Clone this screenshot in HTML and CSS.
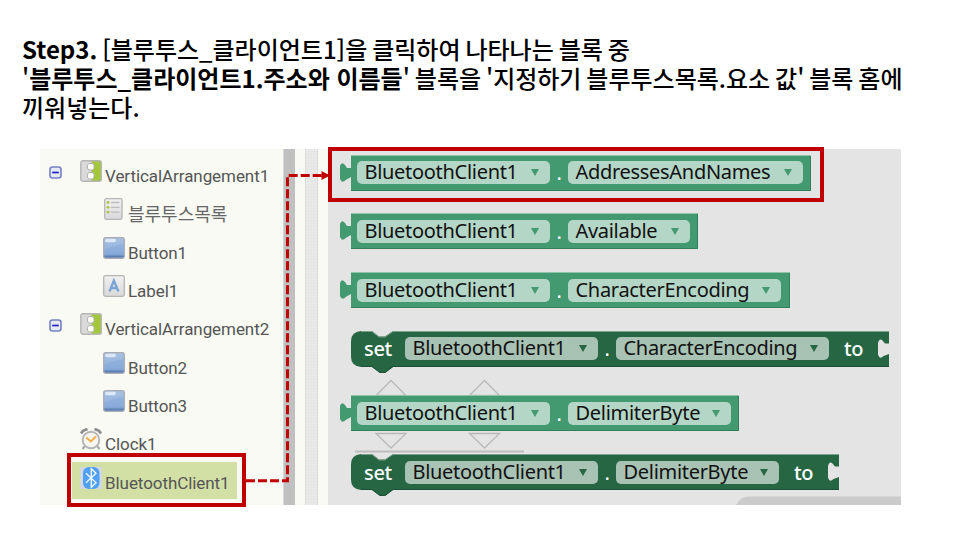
FILE: index.html
```
<!DOCTYPE html>
<html lang="ko">
<head>
<meta charset="utf-8">
<title>Step3</title>
<link rel="stylesheet" href="styles.css">
</head>
<body>
<svg class="defs" aria-hidden="true">
  <defs>
    <linearGradient id="blue" x1="0" y1="0" x2="0" y2="1"><stop offset="0" stop-color="#a9c1e2"/><stop offset=".75" stop-color="#8fb0dc"/><stop offset="1" stop-color="#5f83b5"/></linearGradient>
    <linearGradient id="grey" x1="0" y1="0" x2="0" y2="1"><stop offset="0" stop-color="#f1f1f1"/><stop offset="1" stop-color="#d9d9d9"/></linearGradient>
    <symbol id="i-minus" viewBox="0 0 13 13"><rect x="1" y="1" width="11" height="11" rx="2.5" fill="#e6e9f6" stroke="#7680c4" stroke-width="1.6"/><path d="M3.2 6.5h6.6" stroke="#2323c8" stroke-width="1.7"/></symbol>
    <symbol id="i-vert" viewBox="0 0 22 22"><rect x=".8" y=".8" width="20.4" height="20.4" rx="2" fill="#dadada"/><path d="M11.5 1H20a1.5 1.5 0 0 1 1.5 1.5v17A1.5 1.5 0 0 1 20 21h-8.500z" fill="#a4c639"/><rect x=".8" y=".8" width="20.400" height="20.400" rx="2" fill="none" stroke="#b5b5b5" stroke-width="1.400"/><rect x="7.500" y="3.500" width="6.500" height="6.500" rx="2" fill="#fff" stroke="#b0b0b0"/><rect x="7.500" y="12.500" width="6.500" height="6.500" rx="2" fill="#fff" stroke="#b0b0b0"/></symbol>
    <symbol id="i-list" viewBox="0 0 22 22"><rect x="1.700" y=".7" width="17.300" height="20.600" rx="1.500" fill="url(#grey)" stroke="#b5b5b5" stroke-width="1.300"/><g fill="#a4c639"><circle cx="5" cy="4.500" r="1.400"/><circle cx="5" cy="9.300" r="1.400"/><circle cx="5" cy="14.100" r="1.400"/></g><path d="M8 4.500h8.500M8 9.300h8.500M8 14.100h8.500" stroke="#bcbcbc" stroke-width="1.300"/></symbol>
    <symbol id="i-button" viewBox="0 0 22 22"><rect x=".7" y=".7" width="20.600" height="20.600" rx="1.800" fill="url(#blue)" stroke="#a9acb3" stroke-width="1.300"/><path d="M1.500 12C6 12 10 8 20.500 7.500V18.500H1.500z" fill="#83a7d9" opacity=".45"/><rect x="2" y="1.800" width="11" height="3.400" rx="1.700" fill="#dce8f7"/><path d="M1.500 19.300h19" stroke="#5e80b3" stroke-width="1.400"/></symbol>
    <symbol id="i-label" viewBox="0 0 22 22"><rect x=".7" y=".7" width="20.600" height="20.600" rx="1.800" fill="url(#grey)" stroke="#b5b5b5" stroke-width="1.300"/><path d="M6.500 16.500 10.900 5.500 15.400 16.500M8 13h6" fill="none" stroke="#7ba3d6" stroke-width="2.300"/></symbol>
    <symbol id="i-clock" viewBox="0 0 22 22"><path d="M1 5.500 3 2.800 7.500 1M21 5.500 19 2.800 14.500 1" fill="none" stroke="#8d8d8d" stroke-width="2.800"/><path d="m5 18-2.500 3M17 18l2.500 3" stroke="#a5a5a5" stroke-width="2"/><circle cx="11" cy="12" r="8.300" fill="#f7f5f0" stroke="#b4b4b4" stroke-width="1.900"/><path d="m6.300 9.500 4.500 4 5.200-5" fill="none" stroke="#f2ae49" stroke-width="2"/></symbol>
    <symbol id="i-bt" viewBox="0 0 22 22"><rect width="22" height="22" fill="#d2d8dc"/><rect x="3" y="0" width="16.500" height="22" rx="6" fill="#50a0f5"/><path d="m6 6.200 10 9.500-4.700 4.600V1.700L16 6.200 6 15.700" fill="none" stroke="#eef6ff" stroke-width="1.400"/></symbol>
  </defs>
</svg>

<main class="slide">
  <p class="lead"><span class="line"><b>Step3.</b> [블루투스_클라이언트1]을 클릭하여 나타나는 블록 중</span><span class="line">'<b>블루투스_클라이언트1.주소와 이름들</b>' 블록을 '지정하기 블루투스목록.요소 값' 블록 홈에</span><span class="line">끼워넣는다.</span></p>

  <section class="shot">
    <nav class="tree">
      <div class="row"><svg class="toggle"><use href="#i-minus"/></svg><svg class="icon"><use href="#i-vert"/></svg><span>VerticalArrangement1</span></div>
      <div class="row child"><svg class="icon"><use href="#i-list"/></svg><span class="ko">블루투스목록</span></div>
      <div class="row child"><svg class="icon"><use href="#i-button"/></svg><span>Button1</span></div>
      <div class="row child"><svg class="icon"><use href="#i-label"/></svg><span>Label1</span></div>
      <div class="row"><svg class="toggle"><use href="#i-minus"/></svg><svg class="icon"><use href="#i-vert"/></svg><span>VerticalArrangement2</span></div>
      <div class="row child"><svg class="icon"><use href="#i-button"/></svg><span>Button2</span></div>
      <div class="row child"><svg class="icon"><use href="#i-button"/></svg><span>Button3</span></div>
      <div class="row leaf"><svg class="icon"><use href="#i-clock"/></svg><span>Clock1</span></div>
      <div class="row leaf selected"><svg class="icon"><use href="#i-bt"/></svg><span>BluetoothClient1</span></div>
    </nav>
    <div class="scrollbar"></div>
    <div class="gutter"></div>
    <div class="texture"></div>
    <div class="gutter"></div>
    <div class="flyout">
      <svg class="ghost" width="573" height="356"><g fill="none" stroke="#b9b9b9" stroke-width="1.300"><path d="M48 246.500 63 231.500 78 246.500zM141.500 246.500 156.500 231.500 171.500 246.500zM48 284.500h30L63 299zM141.500 284.500h30L156.500 299z"/></g><path d="M27 302.500h169" stroke="#bdbdbd" stroke-width="2"/><path d="M408 356q4-8.500 13-8.500H573v8.500z" fill="#cbcbcb"/></svg>

      <div class="block get w-addr">
        <svg class="shape"><path d="M0 0H460V36H0V22L-5 24.800Q-9 29-11 24V11Q-9.500 6-6 10L-4 13H0z"/><path class="hi" d="M0 .5H460"/><path class="lo" d="M0 35.500H459.500V1"/></svg>
        <span class="pill"><span>BluetoothClient1</span><i></i></span><span class="dot">.</span><span class="pill"><span>AddressesAndNames</span><i></i></span>
      </div>
      <div class="block get w-avail">
        <svg class="shape"><path d="M0 0H347V36H0V22L-5 24.800Q-9 29-11 24V11Q-9.500 6-6 10L-4 13H0z"/><path class="hi" d="M0 .5H347"/><path class="lo" d="M0 35.500H346.500V1"/></svg>
        <span class="pill"><span>BluetoothClient1</span><i></i></span><span class="dot">.</span><span class="pill"><span>Available</span><i></i></span>
      </div>
      <div class="block get w-char">
        <svg class="shape"><path d="M0 0H439V36H0V22L-5 24.800Q-9 29-11 24V11Q-9.500 6-6 10L-4 13H0z"/><path class="hi" d="M0 .5H439"/><path class="lo" d="M0 35.500H438.500V1"/></svg>
        <span class="pill"><span>BluetoothClient1</span><i></i></span><span class="dot">.</span><span class="pill"><span>CharacterEncoding</span><i></i></span>
      </div>
      <div class="block set w-char">
        <svg class="shape"><path d="M10 0H21L28 5.500H34L42 0H538V12.500H534L531.500 9.500Q528.500 6.500 527 12V23.500Q528.500 29 532.500 25L538 23V36H42L34 42H29L21 36H10Q0 35 0 26V10Q0 1 10 0z"/><path class="hi" d="M10 .5H21L28 6H34L42 .5H538"/><path class="lo" d="M10 35.500H21L29 41.500H34L42 35.500H538"/></svg>
        <span class="word">set</span><span class="pill"><span>BluetoothClient1</span><i></i></span><span class="dot">.</span><span class="pill"><span>CharacterEncoding</span><i></i></span><span class="word to">to</span>
      </div>
      <div class="block get w-delim">
        <svg class="shape"><path d="M0 0H388V36H0V22L-5 24.800Q-9 29-11 24V11Q-9.500 6-6 10L-4 13H0z"/><path class="hi" d="M0 .5H388"/><path class="lo" d="M0 35.500H387.500V1"/></svg>
        <span class="pill"><span>BluetoothClient1</span><i></i></span><span class="dot">.</span><span class="pill"><span>DelimiterByte</span><i></i></span>
      </div>
      <div class="block set w-delim">
        <svg class="shape"><path d="M10 0H21L28 5.500H34L42 0H488V12.500H484L481.500 9.500Q478.500 6.500 477 12V23.500Q478.500 29 482.500 25L488 23V36H42L34 42H29L21 36H10Q0 35 0 26V10Q0 1 10 0z"/><path class="hi" d="M10 .5H21L28 6H34L42 .5H488"/><path class="lo" d="M10 35.500H21L29 41.500H34L42 35.500H488"/></svg>
        <span class="word">set</span><span class="pill"><span>BluetoothClient1</span><i></i></span><span class="dot">.</span><span class="pill"><span>DelimiterByte</span><i></i></span><span class="word to">to</span>
      </div>
    </div>
  </section>

  <svg class="callout" width="960" height="540" viewBox="0 0 960 540" fill="none" stroke="#c00000">
    <rect x="330" y="149" width="492" height="51" stroke-width="4"/>
    <rect x="69" y="455" width="175" height="50" stroke-width="4"/>
    <path d="M246 480.800H287.500V175.500H322" stroke-width="3" stroke-dasharray="9 3"/>
    <path d="M321.500 171 330 175.500 321.500 180z" fill="#c00000" stroke="none"/>
  </svg>
</main>
</body>
</html>
```
FILE: styles.css
```
* { box-sizing: border-box; }
body { margin: 0; background: #fff; }
.defs { position: absolute; width: 0; height: 0; }
.slide { position: relative; width: 960px; height: 540px; overflow: hidden; padding: 34px 0 0 22px; }
.lead {
  margin: 0 0 28px; height: 87px; word-spacing: -1.800px;
  font: 500 24px/29px "Noto Sans CJK KR", sans-serif; color: #000; white-space: nowrap;
}
.line { display: block; height: 29px; }
.lead b { font-weight: 700; word-spacing: 0; }

.shot { display: flex; width: 861px; height: 356px; margin-left: 18px; background: #f8faf3; overflow: hidden; }
.tree { width: 243px; padding: 6px 0 0 9px; }
.row {
  display: flex; align-items: flex-start; height: 37px; margin-bottom: 1.350px;
  font: 400 17px/20px Roboto, sans-serif; letter-spacing: -.07px; color: #555;
}
.row span { margin: 11px 0 0 3px; white-space: nowrap; }
.row .ko { margin-top: 10px; font: 400 18px/20px "Noto Sans CJK KR", sans-serif; letter-spacing: 0; color: #666; }
.toggle { width: 13px; height: 13px; margin: 11px 18px 0 0; }
.icon { width: 22px; height: 22px; margin-top: 5px; flex: none; }
.child { padding-left: 54px; }
.leaf { padding-left: 31px; }
.selected { width: 165px; margin-left: 23px; padding-left: 8px; background: #d2e0a6; }
.scrollbar { width: 12px; background: #c0c0c0; border-left: 1px solid #d8d8da; }
.gutter { width: 10px; }
.texture {
  width: 13px; border: solid #dcdcdc; border-width: 0 1px;
  background: repeating-linear-gradient(90deg, #e6e6e600 0 2px, #dfdfdf55 2px 3px), repeating-linear-gradient(#eaeaea 0 2px, #e6e6e6 2px 3px);
}

.flyout { position: relative; width: 573px; padding: 5.500px 0 0 23px; background: #e4e4e4; }
.ghost { position: absolute; left: 0; top: 0; }
.block {
  position: relative; display: flex; align-items: center; height: 36px; margin-bottom: 22.800px;
  font: 400 20px/23px "Noto Sans", sans-serif; letter-spacing: -.3px; color: #111;
}
.shape { position: absolute; left: 0; top: 0; width: 100%; height: 36px; overflow: visible; }
.get { padding-left: 6px; --block: #439970; --pill: #b4d6c6; --hi: #8fc4ab; --lo: #32805a; }
.set { padding-left: 13px; --block: #266643; --pill: #a8c2b4; --hi: #7ba18c; --lo: #1b5033; }
.set.w-char { margin-bottom: 28.500px; }
.shape path { fill: var(--block); }
.shape .hi { fill: none; stroke: var(--hi); }
.shape .lo { fill: none; stroke: var(--lo); }
.pill {
  position: relative; display: flex; align-items: center; justify-content: space-between; flex: none;
  width: 193px; height: 23px; padding: 0 11px 0 7.500px; border-radius: 5px; background: var(--pill); white-space: nowrap;
}
.pill span { margin-top: -2px; }
.pill i { border: solid transparent; border-width: 7px 4px 0; border-top-color: var(--block); }
.dot { position: relative; width: 18px; text-align: center; color: #fff; }
.w-addr .dot + .pill { width: 235px; }
.w-avail .dot + .pill { width: 122px; }
.w-char .dot + .pill { width: 213px; }
.w-delim .dot + .pill { width: 163px; }
.word { position: relative; width: 41px; color: #fff; font-weight: 500; }
.to { margin-left: 15px; }
.callout { position: absolute; left: 0; top: 0; }
```
